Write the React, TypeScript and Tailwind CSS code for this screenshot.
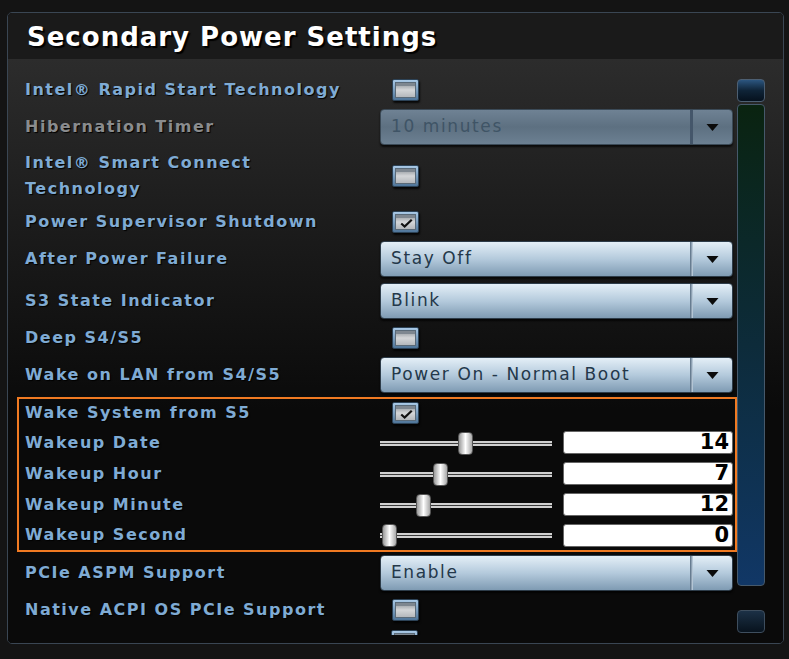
import React from "react";

type Row =
  | { kind: "check"; label: string[]; checked?: boolean; h: number }
  | { kind: "select"; label: string[]; value: string; h: number; disabled?: boolean };

const topRows: Row[] = [
  { kind: "check", label: ["Intel® Rapid Start Technology"], h: 36 },
  { kind: "select", label: ["Hibernation Timer"], value: "10 minutes", h: 38, disabled: true },
  { kind: "check", label: ["Intel® Smart Connect", "Technology"], h: 60 },
  { kind: "check", label: ["Power Supervisor Shutdown"], checked: true, h: 32 },
  { kind: "select", label: ["After Power Failure"], value: "Stay Off", h: 42 },
  { kind: "select", label: ["S3 State Indicator"], value: "Blink", h: 42 },
  { kind: "check", label: ["Deep S4/S5"], h: 32 },
  { kind: "select", label: ["Wake on LAN from S4/S5"], value: "Power On - Normal Boot", h: 42 },
];

const bottomRows: Row[] = [
  { kind: "select", label: ["PCIe ASPM Support"], value: "Enable", h: 42 },
  { kind: "check", label: ["Native ACPI OS PCIe Support"], h: 32 },
];

const wakeRows = [
  { label: "Wakeup Date", value: 14, thumb: 78, h: 31 },
  { label: "Wakeup Hour", value: 7, thumb: 53, h: 31 },
  { label: "Wakeup Minute", value: 12, thumb: 36, h: 31 },
  { label: "Wakeup Second", value: 0, thumb: 2, h: 30 },
];

function Checkbox({ checked = false }: { checked?: boolean }) {
  return (
    <div className="flex h-[22px] w-[27px] items-center justify-center rounded-[2px] border border-[#2c4256] bg-gradient-to-b from-[#a9c9e6] to-[#4f7599] p-[2px] shadow-[1px_2px_2px_rgba(0,0,0,0.8)]">
      <div className="relative h-full w-full border border-[#5a6a78] bg-gradient-to-b from-[#8e949a] via-[#d4d6d8] to-[#b4b8bc]">
        <div className="h-[3px] w-full bg-[#7e8790]" />
        {checked && (
          <svg viewBox="0 0 20 14" className="absolute left-[3px] top-[3px] h-[11px] w-[15px]">
            <path d="M3 7 L7.5 11 L17 2" fill="none" stroke="#111" strokeWidth="3" />
          </svg>
        )}
      </div>
    </div>
  );
}

function Select({ value, disabled = false }: { value: string; disabled?: boolean }) {
  const body = disabled
    ? "from-[#6f8294] via-[#5d7081] to-[#6c8092] border-[#3b4a57]"
    : "from-[#e4eff7] via-[#b4cadc] to-[#7f9bb3] border-[#2d3c49]";
  return (
    <div
      className={`flex h-[36px] w-[353px] overflow-hidden rounded-[4px] border bg-gradient-to-b shadow-[0_2px_2px_rgba(0,0,0,0.7)] ${body}`}
    >
      <div
        className={`flex flex-1 items-center pl-[10px] font-['DejaVu_Sans'] text-[17px] tracking-[1.6px] ${
          disabled ? "text-[#3f5466]" : "text-[#24384a]"
        }`}
      >
        {value}
      </div>
      <div className={`w-[3px] ${disabled ? "bg-[#44566a]" : "bg-gradient-to-r from-[#556b80] to-[#c8d8e6]"}`} />
      <div className="flex w-[39px] items-center justify-center">
        <svg viewBox="0 0 12 7" className="h-[7px] w-[13px]">
          <path d="M0 0 H12 L6 7 Z" fill="#0b0b0b" />
        </svg>
      </div>
    </div>
  );
}

function Label({ lines, disabled }: { lines: string[]; disabled?: boolean }) {
  return (
    <div
      className={`font-['DejaVu_Sans'] text-[16px] font-bold leading-[26px] tracking-[1.5px] [text-shadow:1px_1px_1px_#000] ${
        disabled ? "text-[#8a8c8e]" : "text-[#7fabd4]"
      }`}
    >
      {lines.map((l) => (
        <div key={l}>{l}</div>
      ))}
    </div>
  );
}

function SettingRow({ row }: { row: Row }) {
  return (
    <div className="flex items-center" style={{ height: row.h }}>
      <div className="w-[372px] pl-[17px]">
        <Label lines={row.label} disabled={row.kind === "select" && row.disabled} />
      </div>
      {row.kind === "check" ? (
        <div className="ml-[12px]">
          <Checkbox checked={row.checked} />
        </div>
      ) : (
        <Select value={row.value} disabled={row.disabled} />
      )}
    </div>
  );
}

function Slider({ thumb }: { thumb: number }) {
  return (
    <div className="relative h-[24px] w-[172px]">
      <div className="absolute left-0 right-0 top-[10px] h-[5px] border-y-[2px] border-[#d0d0d0] bg-[#3a3a3a]" />
      <div
        className="absolute top-[1px] h-[23px] w-[15px] rounded-[4px] border border-[#555] bg-gradient-to-r from-[#9a9a9a] via-[#ffffff] to-[#a8a8a8]"
        style={{ left: thumb }}
      />
    </div>
  );
}

export default function App() {
  return (
    <div className="h-[659px] w-[789px] overflow-hidden bg-[#141414] pl-[7px] pt-[12px]">
      <div className="h-[632px] w-[777px] overflow-hidden rounded-[5px] border border-[#3a4653] bg-[#0a0a0a]">
        <div className="flex h-[46px] items-center bg-[#1a1a1a] pl-[19px] pt-[2px] font-['DejaVu_Sans'] text-[26px] font-bold tracking-[1px] text-white [text-shadow:2px_2px_1px_#000]">
          Secondary Power Settings
        </div>
        <div className="flex h-[584px] bg-[linear-gradient(to_bottom,#2c2c2c_0%,#181818_35%,#0a0a0a_60%,#0a0a0a_100%)]">
          <div className="h-[576px] w-[729px] overflow-hidden pt-[13px]">
            {topRows.map((r) => (
              <SettingRow key={r.label[0]} row={r} />
            ))}
            <div className="ml-[9px] mt-[1px] w-[720px] border-2 border-[#f07a22]">
              <div className="flex h-[28px] items-center">
                <div className="w-[361px] pl-[6px]">
                  <Label lines={["Wake System from S5"]} />
                </div>
                <div className="ml-[12px]">
                  <Checkbox checked />
                </div>
              </div>
              {wakeRows.map((w) => (
                <div key={w.label} className="flex items-center" style={{ height: w.h }}>
                  <div className="w-[361px] pl-[6px]">
                    <Label lines={[w.label]} />
                  </div>
                  <Slider thumb={w.thumb} />
                  <div className="ml-[11px] flex h-[23px] w-[170px] items-center justify-end rounded-[3px] border border-[#666] bg-white pr-[3px] font-['DejaVu_Sans'] text-[21px] font-bold leading-none text-black">
                    {w.value}
                  </div>
                </div>
              ))}
            </div>
            {bottomRows.map((r) => (
              <SettingRow key={r.label[0]} row={r} />
            ))}
            <div className="ml-[383px] pt-[4px]">
              <Checkbox />
            </div>
          </div>
          <div className="flex w-[28px] flex-col pt-[20px]">
            <div className="h-[23px] rounded-[4px] border border-[#4d5f72] bg-gradient-to-b from-[#2c5680] via-[#0f2438] to-[#06111d]" />
            <div className="mt-[2px] h-[482px] rounded-[4px] border border-[#46596b] bg-gradient-to-b from-[#0a2310] via-[#0d2b3a] to-[#113766]" />
            <div className="mt-[24px] h-[23px] rounded-[4px] border border-[#3e4e5e] bg-gradient-to-b from-[#1c3146] to-[#08131e]" />
          </div>
        </div>
      </div>
    </div>
  );
}
